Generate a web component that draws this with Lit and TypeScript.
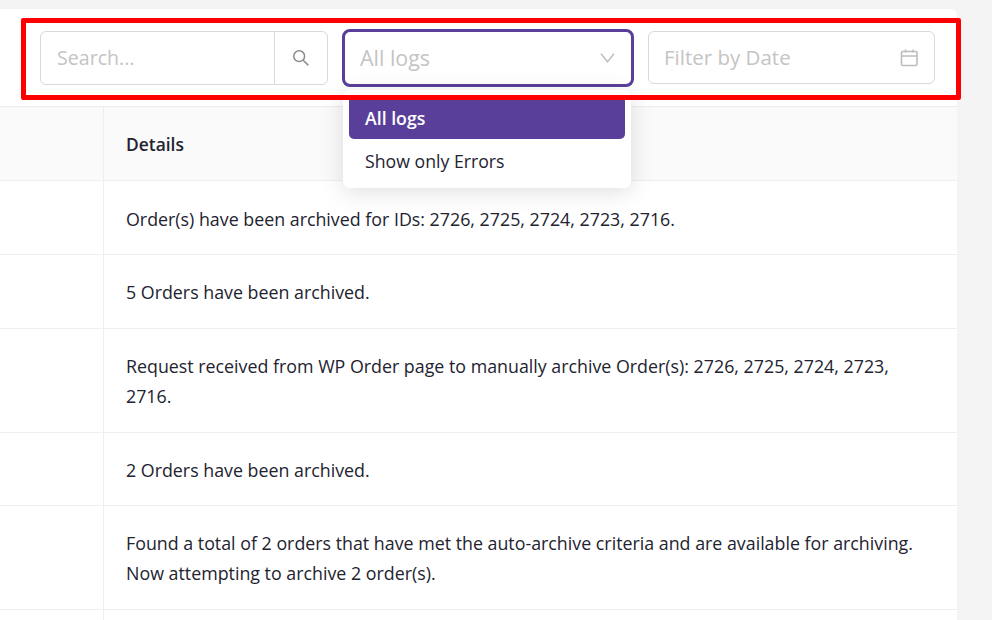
import { LitElement, html, css } from "lit";
import { customElement } from "lit/decorators.js";

const rows = [
  "Order(s) have been archived for IDs: 2726, 2725, 2724, 2723, 2716.",
  "5 Orders have been archived.",
  "Request received from WP Order page to manually archive Order(s): 2726, 2725, 2724, 2723, 2716.",
  "2 Orders have been archived.",
  "Found a total of 2 orders that have met the auto-archive criteria and are available for archiving. Now attempting to archive 2 order(s).",
  "",
];

@customElement("app-root")
export class AppRoot extends LitElement {
  static styles = css`
    :host {
      display: block;
      position: relative;
      width: 992px;
      height: 620px;
      overflow: hidden;
      background: #f4f4f4;
      font-family: "Open Sans", "Noto Sans", sans-serif;
      color: #23232f;
      font-size: 17.82px;
    }
    .card {
      position: relative;
      width: 957px;
      margin-top: 9px;
      background: #fff;
      border-top-right-radius: 6px;
    }
    .toolbar {
      height: 98px;
      box-sizing: border-box;
      padding: 22px 22px 0 40px;
      display: flex;
      gap: 14px;
      align-items: flex-start;
      border-bottom: 1px solid #ececec;
    }
    .field {
      box-sizing: border-box;
      height: 54px;
      border: 1px solid #d9d9d9;
      border-radius: 6px;
      display: flex;
      align-items: center;
      color: #c4c4c4;
      font-size: 20.5px;
      background: #fff;
    }
    .label { margin-bottom: 2px; }
    .search { width: 288px; }
    .search .label { flex: 1; padding-left: 16px; font-size: 19.6px; }
    .search .btn {
      width: 53px;
      height: 100%;
      box-sizing: border-box;
      border-left: 1px solid #d9d9d9;
      display: flex;
      align-items: center;
      justify-content: center;
    }
    .select {
      width: 292px;
      height: 58px;
      margin-top: -2px;
      border: 3px solid #5a3f9a;
      border-radius: 8px;
      padding: 0 16px 0 15px;
      justify-content: space-between;
      font-size: 21.4px;
    }
    .date {
      width: 287px;
      height: 53px;
      padding: 0 16px 0 15px;
      justify-content: space-between;
    }
    .row {
      display: grid;
      grid-template-columns: 104px 1fr;
      border-bottom: 1px solid #efefef;
    }
    .row > div:first-child { border-right: 1px solid #efefef; }
    .cell {
      padding: 22.2px 22px 20.5px 22px;
      line-height: 30px;
    }
    .head { background: #fafafa; }
    .head .cell { font-weight: 600; padding-bottom: 21.3px; font-size: 17.4px; }
    .menu {
      position: absolute;
      left: 343px;
      top: 90px;
      width: 288px;
      box-sizing: border-box;
      padding: 6px;
      background: #fff;
      border-radius: 7px;
      font-size: 17.7px;
      box-shadow: 0 4px 24px rgba(0, 0, 0, 0.13);
    }
    .opt {
      height: 43px;
      padding-left: 16px;
      display: flex;
      align-items: center;
      border-radius: 5px;
    }
    .opt.on {
      background: #5a3f9a;
      color: #fff;
      font-weight: 600;
    }
    .mark {
      position: absolute;
      left: 21px;
      top: 18px;
      width: 940px;
      height: 82px;
      box-sizing: border-box;
      border: 5px solid #ff0000;
      border-radius: 2px;
      pointer-events: none;
    }
    svg { display: block; }
  `;

  render() {
    return html`
      <div class="card">
        <div class="toolbar">
          <div class="field search">
            <div class="label">Search...</div>
            <div class="btn">
              <svg width="18" height="18" viewBox="0 0 18 18" fill="none" stroke="#8c8c8c" stroke-width="1.5">
                <circle cx="7.2" cy="7.2" r="5.4"></circle>
                <path d="M11.2 11.2 16.4 16.4"></path>
              </svg>
            </div>
          </div>
          <div class="field select">
            <span class="label">All logs</span>
            <svg width="16" height="10" viewBox="0 0 16 10" fill="none" stroke="#bdbdbd" stroke-width="1.4">
              <path d="M2 .8 8.5 8.8 15 .8"></path>
            </svg>
          </div>
          <div class="field date">
            <span class="label">Filter by Date</span>
            <svg width="18" height="18" viewBox="0 0 18 18" fill="none" stroke="#bdbdbd" stroke-width="1.6">
              <rect x="1.5" y="2.5" width="15.5" height="14" rx="1"></rect>
              <path d="M1.5 7h15.5M5.5 0.5v3M13 0.5v3"></path>
            </svg>
          </div>
        </div>
        <div class="row head">
          <div></div>
          <div class="cell">Details</div>
        </div>
        ${rows.map(
          (t) => html`<div class="row"><div></div><div class="cell">${t}</div></div>`
        )}
      </div>
      <div class="menu">
        <div class="opt on">All logs</div>
        <div class="opt">Show only Errors</div>
      </div>
      <div class="mark"></div>
    `;
  }
}
